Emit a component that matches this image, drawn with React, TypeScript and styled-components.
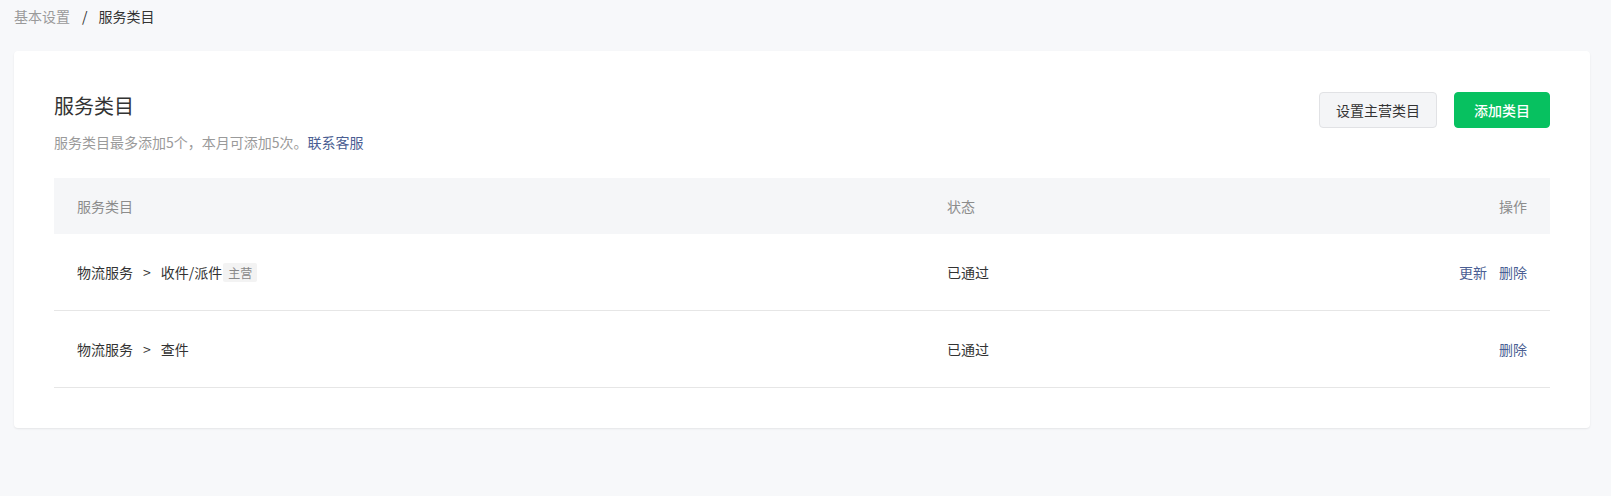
import React from 'react'
import styled, { createGlobalStyle } from 'styled-components'

const GlobalStyle = createGlobalStyle`
  html, body {
    margin: 0;
    padding: 0;
    background: #f7f8fa;
    font-family: "Noto Sans CJK SC", "Noto Sans", sans-serif;
    color: #333;
  }
`;

type Row = {
  path: string[];
  main?: boolean;
  status: string;
  actions: string[];
};

const rows: Row[] = [
  { path: ['物流服务', '收件/派件'], main: true, status: '已通过', actions: ['更新', '删除'] },
  { path: ['物流服务', '查件'], status: '已通过', actions: ['删除'] },
];

const App = () => {
  return (
    <Page>
      <GlobalStyle />
      <Crumbs>
        <CrumbLink>基本设置</CrumbLink>
        <CrumbSep>/</CrumbSep>
        <CrumbCurrent>服务类目</CrumbCurrent>
      </Crumbs>
      <Card>
        <Header>
          <div>
            <Title>服务类目</Title>
            <Desc>
              服务类目最多添加5个，本月可添加5次。<Link>联系客服</Link>
            </Desc>
          </div>
          <Buttons>
            <Button>设置主营类目</Button>
            <Button primary>添加类目</Button>
          </Buttons>
        </Header>
        <Table>
          <HeadRow>
            <Cell>服务类目</Cell>
            <Cell>状态</Cell>
            <Cell right>操作</Cell>
          </HeadRow>
          {rows.map((r, i) => (
            <BodyRow key={i}>
              <Cell>
                {r.path[0]}
                <Arrow>&gt;</Arrow>
                {r.path[1]}
                {r.main && <Tag>主营</Tag>}
              </Cell>
              <Cell>{r.status}</Cell>
              <Cell right>
                {r.actions.map(a => (
                  <Action key={a}>{a}</Action>
                ))}
              </Cell>
            </BodyRow>
          ))}
        </Table>
      </Card>
    </Page>
  )
}

export default App

const Page = styled.div`
  padding: 0 21px 40px 14px;
`;
const Crumbs = styled.div`
  display: flex;
  align-items: center;
  height: 20px;
  padding-top: 6px;
  font-size: 14px;
  line-height: 20px;
`;
const CrumbLink = styled.span`
  color: #9a9a9a;
`;
const CrumbSep = styled.span`
  color: #333;
  margin: 0 11px 0 12px;
`;
const CrumbCurrent = styled.span`
  color: #333;
`;
const Card = styled.div`
  margin-top: 25px;
  background: #fff;
  border-radius: 4px;
  box-shadow: 0 1px 2px rgba(0, 0, 0, 0.08);
  padding: 40px 40px 40px;
`;
const Header = styled.div`
  display: flex;
  justify-content: space-between;
  align-items: flex-start;
  margin-bottom: 25px;
`;
const Title = styled.div`
  font-size: 20px;
  line-height: 30px;
  color: #333;
`;
const Desc = styled.div`
  margin-top: 10px;
  font-size: 14px;
  line-height: 22px;
  color: #9a9a9a;
`;
const Link = styled.a`
  color: #4a5e93;
  cursor: pointer;
`;
const Buttons = styled.div`
  display: flex;
  gap: 17px;
  margin-top: 1px;
`;
const Button = styled.button<{ primary?: boolean }>`
  height: 36px;
  padding: 0 ${p => (p.primary ? '19px' : '16px')};
  border-radius: 4px;
  font-family: inherit;
  font-size: 14px;
  cursor: pointer;
  border: 1px solid ${p => (p.primary ? '#07c160' : '#e1e2e5')};
  background: ${p => (p.primary ? '#07c160' : '#f4f5f7')};
  color: ${p => (p.primary ? '#fff' : '#333')};
  font-weight: ${p => (p.primary ? 500 : 400)};
`;
const Table = styled.div`
  display: flex;
  flex-direction: column;
`;
const HeadRow = styled.div`
  display: grid;
  grid-template-columns: 870px 1fr 200px;
  align-items: center;
  height: 56px;
  padding: 0 23px;
  background: #f5f6f8;
  color: #8c8c8c;
  font-size: 14px;
`;
const BodyRow = styled.div`
  display: grid;
  grid-template-columns: 870px 1fr 200px;
  align-items: center;
  height: 76px;
  padding: 0 23px;
  border-bottom: 1px solid #e6e6e6;
  font-size: 14px;
  color: #333;
`;
const Cell = styled.div<{ right?: boolean }>`
  display: flex;
  align-items: center;
  justify-content: ${p => (p.right ? 'flex-end' : 'flex-start')};
  gap: ${p => (p.right ? '12px' : '0')};
`;
const Arrow = styled.span`
  margin: 0 10px;
`;
const Tag = styled.span`
  margin-left: 1px;
  padding: 0 5px;
  height: 19px;
  line-height: 19px;
  font-size: 12px;
  background: #f3f3f3;
  color: #888;
  border-radius: 2px;
`;
const Action = styled.a`
  color: #4a5e93;
  cursor: pointer;
`;
